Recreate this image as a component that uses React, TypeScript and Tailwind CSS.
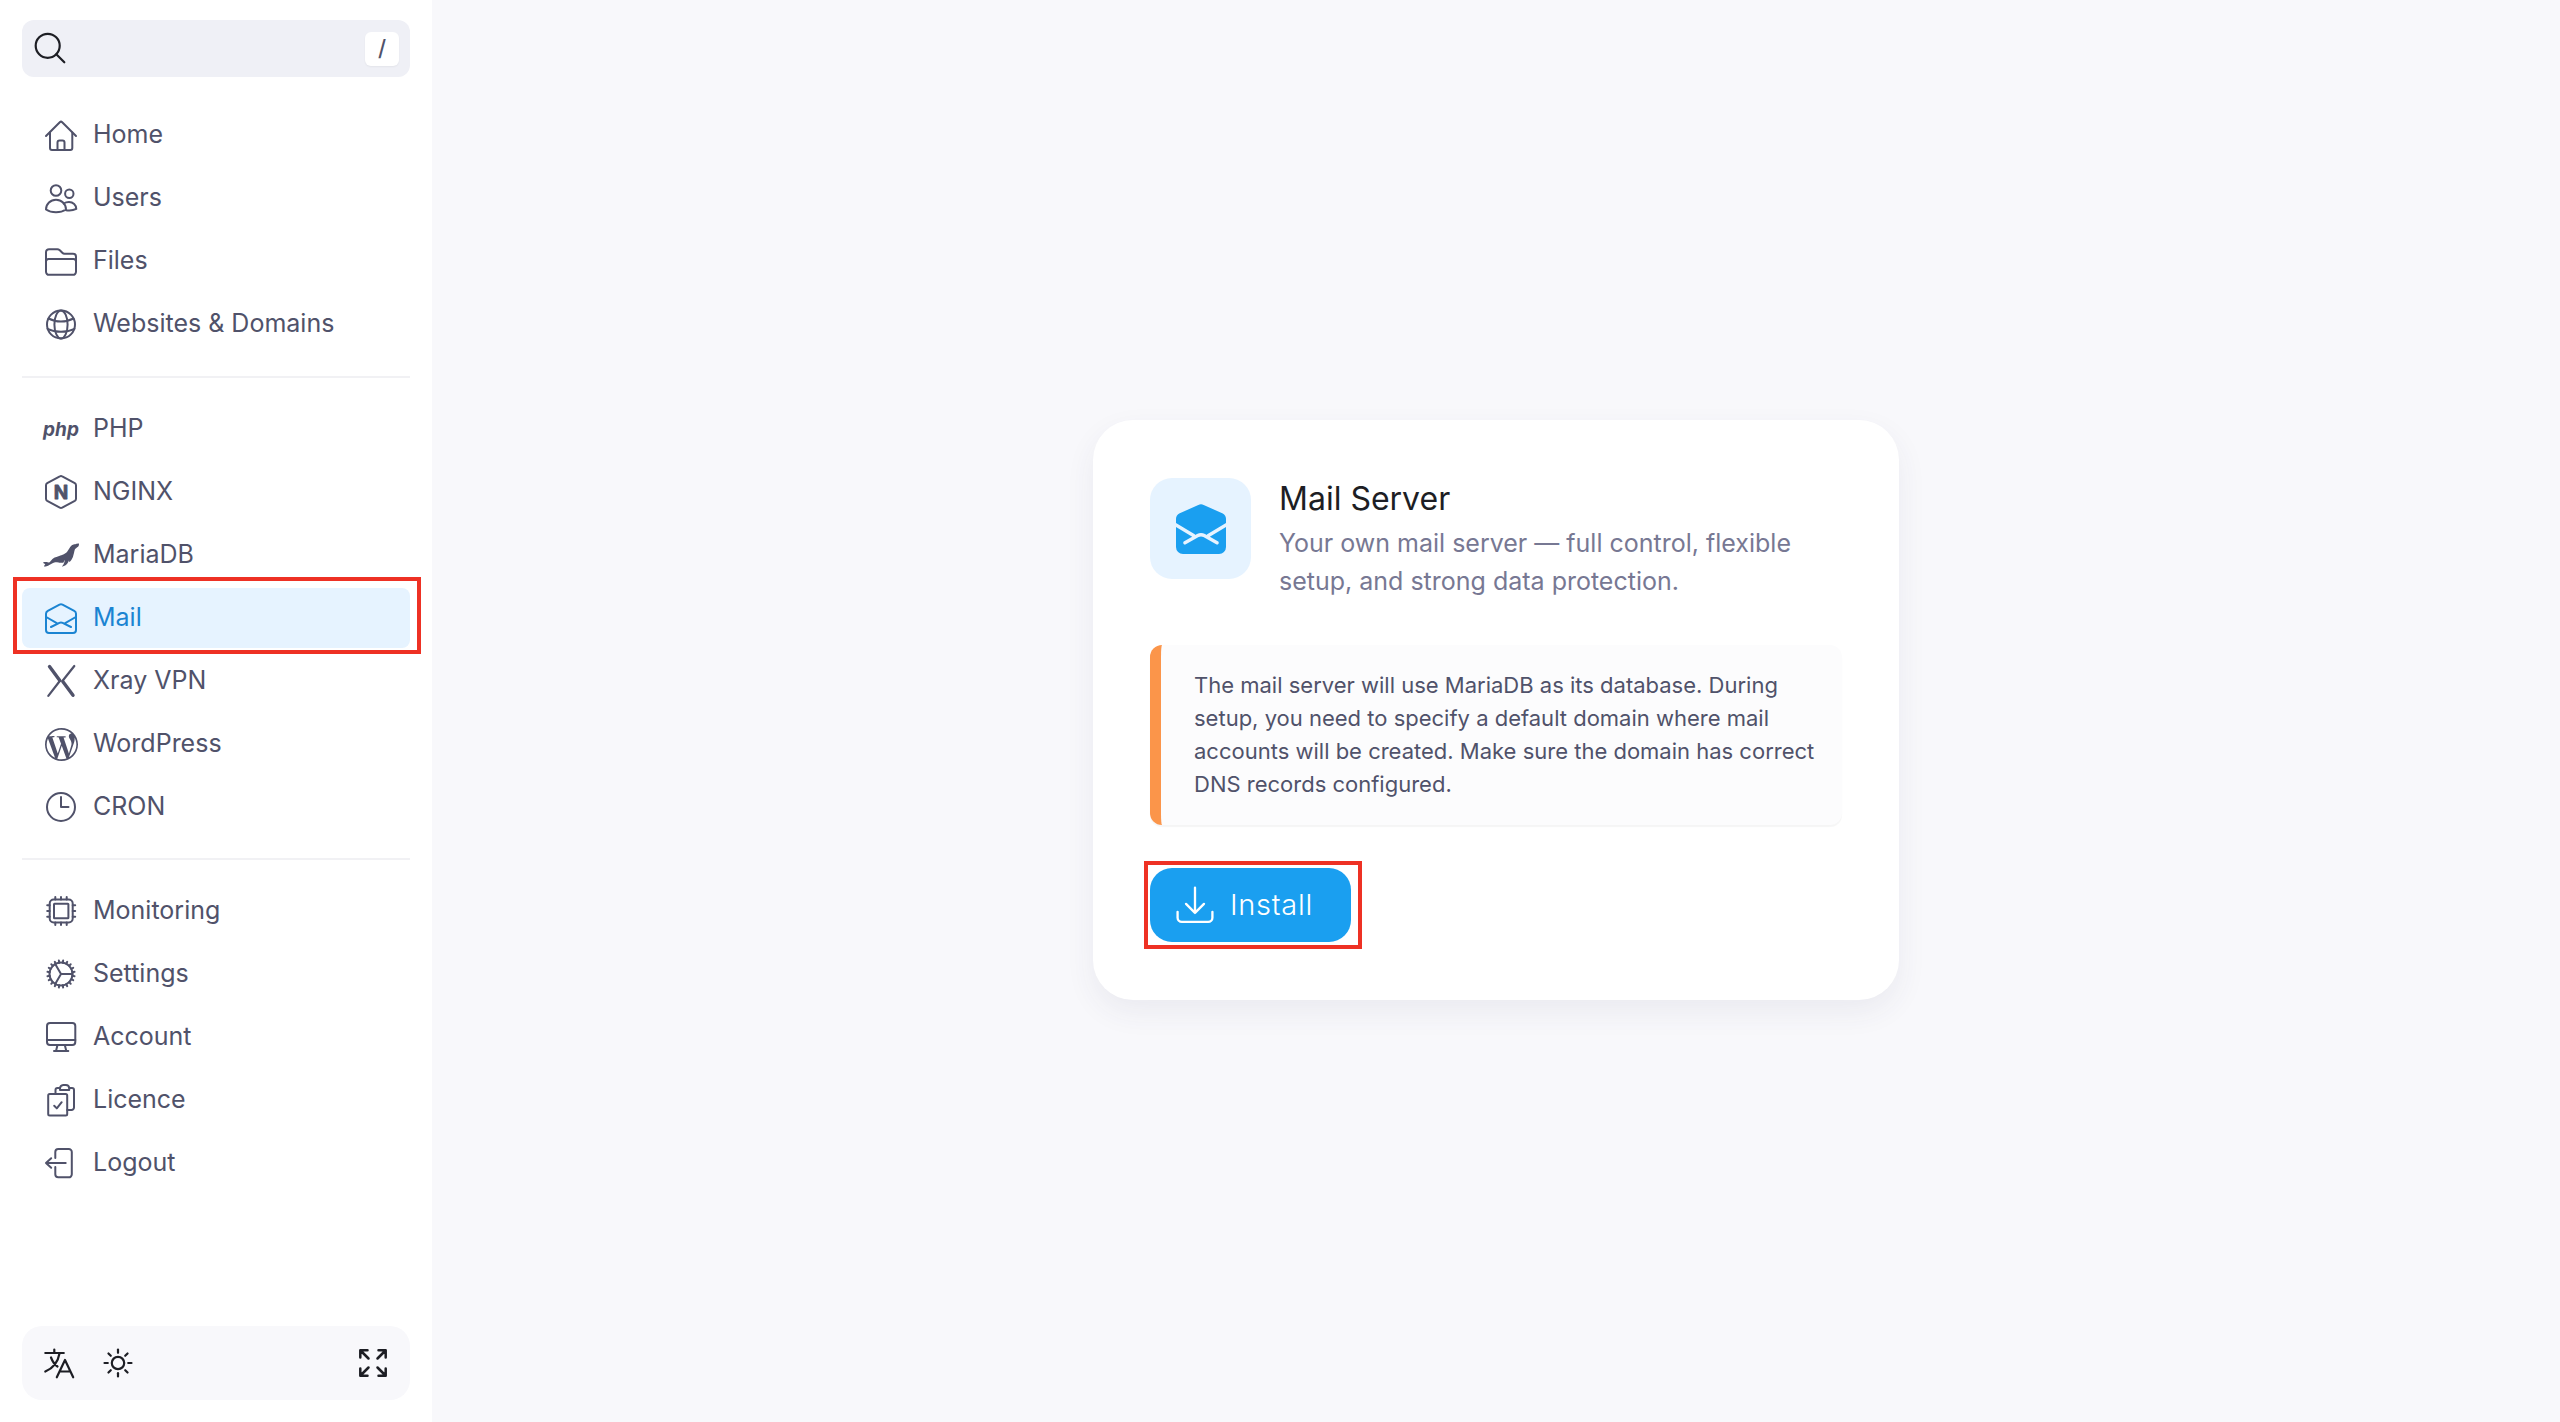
import type { ReactNode } from "react";
import { SiMariadb, SiWordpress } from "react-icons/si";

type NavItem = {
  label: string;
  icon: ReactNode;
  active?: boolean;
};

function Icon({ children, className = "size-9" }: { children: ReactNode; className?: string }) {
  return (
    <svg
      viewBox="0 0 36 36"
      className={`shrink-0 ${className}`}
      fill="none"
      stroke="currentColor"
      strokeWidth="2"
      strokeLinecap="round"
      strokeLinejoin="round"
      aria-hidden="true"
    >
      {children}
    </svg>
  );
}

const GEAR_TEETH = Array.from({ length: 20 }, (_, i) => i * 18 + 9);
const SUN_RAYS = Array.from({ length: 8 }, (_, i) => i * 45);
const CORNERS = [0, 90, 180, 270];

const MAIN: NavItem[] = [
  {
    label: "Home",
    icon: (
      <Icon>
        <path d="M3 19 16.8 5.2a1.7 1.7 0 0 1 2.4 0L33 19" />
        <path d="M7 15.500V31a2 2 0 0 0 2 2h18.300a2 2 0 0 0 2-2V15.500" />
        <path d="M14.500 33v-7.500a2 2 0 0 1 2-2h3a2 2 0 0 1 2 2V33" />
      </Icon>
    ),
  },
  {
    label: "Users",
    icon: (
      <Icon>
        <circle cx="13" cy="10.500" r="5.300" />
        <circle cx="26.300" cy="13.700" r="4.200" />
        <path d="M3 29.500c0-5.500 4.500-9.700 10-9.700s10 4.200 10 9.700c-2.800 1.900-6.300 2.800-10 2.800S5.800 31.400 3 29.500Z" />
        <path d="M20.600 23.500c1.500-.9 3.400-1.500 5.400-1.500 4 0 7.300 2.800 7.300 6.900-3 1.500-6.500 1.900-10.300 1.300" />
      </Icon>
    ),
  },
  {
    label: "Files",
    icon: (
      <Icon>
        <path d="M3 28.800V9.200a3 3 0 0 1 3-3h8.300c1 0 1.800.4 2.500 1l2.500 2.600c.6.600 1.400 1 2.200 1H30a3 3 0 0 1 3 3v15a3 3 0 0 1-3 3H6a3 3 0 0 1-3-3Z" />
        <path d="M3 18.500A2.500 2.500 0 0 1 5.500 16h25a2.500 2.500 0 0 1 2.500 2.500" />
      </Icon>
    ),
  },
  {
    label: "Websites & Domains",
    icon: (
      <Icon>
        <circle cx="18" cy="18.500" r="14" />
        <ellipse cx="18" cy="18.500" rx="6.600" ry="14" />
        <path d="M5.500 12.500c7.500 4 17.500 4 25 0M4.500 22.800c8 4 19 4 27 0" />
      </Icon>
    ),
  },
];

const SERVICES: NavItem[] = [
  {
    label: "PHP",
    icon: (
      <span aria-hidden="true" className="flex w-9 shrink-0 justify-center text-[19px] leading-none font-bold italic">
        php
      </span>
    ),
  },
  {
    label: "NGINX",
    icon: (
      <Icon>
        <path d="M16.800 2.300a2.400 2.400 0 0 1 2.400 0l12.600 6.900a2.400 2.400 0 0 1 1.200 2.100v13.400a2.400 2.400 0 0 1-1.200 2.100l-12.600 6.900a2.400 2.400 0 0 1-2.400 0L4.200 26.800A2.400 2.400 0 0 1 3 24.700V11.300a2.400 2.400 0 0 1 1.200-2.100Z" />
        <text
          x="18"
          y="25"
          textAnchor="middle"
          fill="currentColor"
          strokeWidth="0.8"
          className="text-[19px] font-bold"
        >
          N
        </text>
      </Icon>
    ),
  },
  { label: "MariaDB", icon: <SiMariadb className="size-9 shrink-0" aria-hidden="true" /> },
  {
    label: "Mail",
    active: true,
    icon: (
      <Icon>
        <path d="M3 13.800c0-1.300.7-2.400 1.800-3L16.500 4.600a3.200 3.200 0 0 1 3 0l11.700 6.200c1.100.6 1.800 1.700 1.800 3V30a3 3 0 0 1-3 3H6a3 3 0 0 1-3-3Z" />
        <path d="m3.200 17 10.600 6.100M32.800 17l-10.600 6.100M8 27l8.400-4.100a3.600 3.600 0 0 1 3.200 0L28 27" />
      </Icon>
    ),
  },
  {
    label: "Xray VPN",
    icon: (
      <Icon>
        <path d="M16.800 18 5.300 32.800M19.800 17.500 31.300 3" strokeWidth="2.200" />
        <path d="m6.500 3.500 10.300 14M19.800 18.500l10.200 13.800" strokeWidth="3.400" />
      </Icon>
    ),
  },
  {
    label: "WordPress",
    icon: (
      <span className="flex w-9 shrink-0 justify-center">
        <SiWordpress className="size-[33px]" aria-hidden="true" />
      </span>
    ),
  },
  {
    label: "CRON",
    icon: (
      <Icon>
        <circle cx="18" cy="18" r="14" />
        <path d="M18 8v10h7.500" />
      </Icon>
    ),
  },
];

const SYSTEM: NavItem[] = [
  {
    label: "Monitoring",
    icon: (
      <Icon>
        <rect x="6.700" y="6.500" width="23" height="23" rx="4" />
        <rect x="11" y="10.800" width="14.400" height="14.400" rx="0.500" />
        <path d="M12.300 4v2.500M18 4v2.500M23.700 4v2.500M12.300 29.500V32M18 29.500V32M23.700 29.500V32M4.200 12.300h2.500M4.200 18h2.500M4.200 23.700h2.500M29.700 12.300h2.500M29.700 18h2.500M29.700 23.700h2.500" />
      </Icon>
    ),
  },
  {
    label: "Settings",
    icon: (
      <Icon>
        <circle cx="18" cy="18" r="11.500" />
        <path d="M18 18h11.500M18 18 12.200 8M18 18l-5.800 10" />
        {GEAR_TEETH.map((deg) => (
          <path key={deg} d="M18 6.500V4.300" transform={`rotate(${deg} 18 18)`} />
        ))}
      </Icon>
    ),
  },
  {
    label: "Account",
    icon: (
      <Icon>
        <rect x="4" y="3.900" width="28.300" height="22" rx="3" />
        <path d="M4 21h28.300M14.500 26 13 32M21.800 26l1.500 6M11 32h14.300" />
      </Icon>
    ),
  },
  {
    label: "Licence",
    icon: (
      <Icon>
        <rect x="5.200" y="12" width="19" height="21.400" rx="1.500" />
        <path d="M12.500 12V8a2 2 0 0 1 2-2h2.200M26.500 6H29a2 2 0 0 1 2 2v17.500a2.500 2.500 0 0 1-2.500 2.500h-4.300" />
        <path d="M17 8V6.200A3.500 3.500 0 0 1 20.200 3h2.600A3.500 3.500 0 0 1 26.200 6.200V8Z" />
        <path d="m11.200 23.800 2.600 2.600 4.900-6.200" />
      </Icon>
    ),
  },
  {
    label: "Logout",
    icon: (
      <Icon>
        <path d="M12.300 13V7a3 3 0 0 1 3-3h10.500a3 3 0 0 1 3 3v22.300a3 3 0 0 1-3 3H15.300a3 3 0 0 1-3-3V22" />
        <path d="M22.700 18H3M8.200 13.200 3 18l5.200 4.800" />
      </Icon>
    ),
  },
];

function NavGroup({ items }: { items: NavItem[] }) {
  return (
    <ul className="flex flex-col gap-[3px]">
      {items.map((item) => (
        <li key={item.label} className="relative">
          <a
            href="#"
            aria-current={item.active ? "page" : undefined}
            className={`flex h-[60px] items-center gap-[14px] rounded-lg pl-[21px] text-[25px] ${
              item.active ? "bg-[#e6f3ff] text-[#1b84d2]" : "text-[#50526a]"
            }`}
          >
            {item.icon}
            {item.label}
          </a>
          {item.active && (
            <span className="pointer-events-none absolute -top-[11px] -right-[11px] -bottom-[6px] -left-[9px] border-4 border-[#ee3124]" />
          )}
        </li>
      ))}
    </ul>
  );
}

function Sidebar() {
  return (
    <aside className="flex w-[432px] shrink-0 flex-col bg-white px-[22px] pt-5 pb-[22px]">
      <div className="flex h-[57px] items-center rounded-xl bg-[#eff0f6] pr-[11px] pl-3 text-[#1d1e24]">
        <Icon>
          <circle cx="13.700" cy="14.800" r="12" strokeWidth="2.200" />
          <path d="m22.300 23.300 8 8" strokeWidth="2.200" />
        </Icon>
        <input type="text" aria-label="Search" className="min-w-0 flex-1 bg-transparent px-3 text-[25px] outline-none" />
        <kbd className="flex size-[34px] items-center justify-center rounded-md bg-white font-[Inter,sans-serif] text-[22px] font-medium text-[#50526a] shadow-xs">
          /
        </kbd>
      </div>

      <nav className="mt-7">
        <NavGroup items={MAIN} />
        <hr className="mt-[22px] mb-[21px] border-t-2 border-[#f1f1f4]" />
        <NavGroup items={SERVICES} />
        <hr className="mt-[21px] mb-[21px] border-t-2 border-[#f1f1f4]" />
        <NavGroup items={SYSTEM} />
      </nav>

      <div className="mt-auto flex h-[74px] items-center rounded-[20px] bg-[#f8f8fb] px-[19px] text-[#1d1e24]">
        <button type="button" aria-label="Language">
          <Icon>
            <path
              d="M13.300 4.500V8M4.300 8h18.500M18.500 8.500C17 17 11.500 23.500 4.300 26.500M10 12.500c1.500 4 3.500 7 6.500 9M15.800 32.300 24 15l8.200 17.300M18.500 26.500h11"
              strokeWidth="2.200"
            />
          </Icon>
        </button>
        <button type="button" aria-label="Theme" className="ml-[23px]">
          <Icon>
            <circle cx="18" cy="18" r="6.200" strokeWidth="2.200" />
            {SUN_RAYS.map((deg) => (
              <path key={deg} d="M18 4.500v3.300" strokeWidth="2.200" transform={`rotate(${deg} 18 18)`} />
            ))}
          </Icon>
        </button>
        <button type="button" aria-label="Full screen" className="ml-auto">
          <Icon>
            {CORNERS.map((deg) => (
              <path key={deg} d="M13.500 13.500 5.500 5.500M5.300 12.500V5.300h7.200" strokeWidth="2.500" transform={`rotate(${deg} 18 18)`} />
            ))}
          </Icon>
        </button>
      </div>
    </aside>
  );
}

function MailCard() {
  return (
    <section className="w-[806px] rounded-[40px] bg-white px-[57px] py-[58px] shadow-[0_12px_30px_rgba(60,60,100,0.07)]">
      <div className="flex items-start gap-7">
        <div className="flex size-[101px] shrink-0 items-center justify-center rounded-[22px] bg-[#e6f3ff] text-[#1a9ff0]">
          <svg viewBox="0 0 50 50" className="size-[50px]" aria-hidden="true">
            <path
              d="M0 14.800c0-2.300 1.200-4.300 3.200-5.300L22.300 1a6 6 0 0 1 5.400 0l19.100 8.500c2 1 3.200 3 3.200 5.300V43a7 7 0 0 1-7 7H7a7 7 0 0 1-7-7Z"
              fill="currentColor"
            />
            <path
              d="m-1 20.500 18.500 11M51 20.500l-18.500 11M9 38.800l12.800-7.200a6.500 6.500 0 0 1 6.400 0L41 38.800"
              fill="none"
              stroke="#e6f3ff"
              strokeWidth="3.400"
              strokeLinecap="round"
            />
          </svg>
        </div>
        <div>
          <h1 className="mb-1 text-[32px] leading-[42px] text-[#1d1e24]">Mail Server</h1>
          <p className="text-[25px] leading-[38px] text-[#777893]">
            Your own mail server — full control, flexible setup, and strong data protection.
          </p>
        </div>
      </div>

      <div className="mt-[45px] rounded-xl border-l-[11px] border-[#fb954a] bg-[#fcfcfd] py-6 pr-5 pl-[33px] text-[22px] leading-[33px] text-[#50526a] shadow-[0_2px_1px_rgba(0,0,0,0.04)]">
        The mail server will use MariaDB as its database. During setup, you need to specify a default domain where mail
        accounts will be created. Make sure the domain has correct DNS records configured.
      </div>

      <div className="relative mt-[43px] w-fit">
        <button
          type="button"
          className="flex h-[74px] items-center gap-4 rounded-[22px] bg-[#1a9ff0] pr-[38px] pl-[26px] text-[29px] font-light tracking-wide text-white"
        >
          <Icon className="size-[38px]">
            <path d="M18 1.500v24M9.500 17l8.500 8.500 8.500-8.500M1.500 24.500V30a4 4 0 0 0 4 4h25a4 4 0 0 0 4-4v-5.500" strokeWidth="2.200" />
          </Icon>
          Install
        </button>
        <span className="pointer-events-none absolute -top-[7px] -right-[11px] -bottom-[7px] -left-[6px] border-4 border-[#ee3124]" />
      </div>
    </section>
  );
}

export default function App() {
  return (
    <div className="flex min-h-screen bg-[#f8f8fb] font-[Inter,sans-serif]">
      <Sidebar />
      <main className="flex flex-1 items-center justify-center pb-0.5">
        <MailCard />
      </main>
    </div>
  );
}
